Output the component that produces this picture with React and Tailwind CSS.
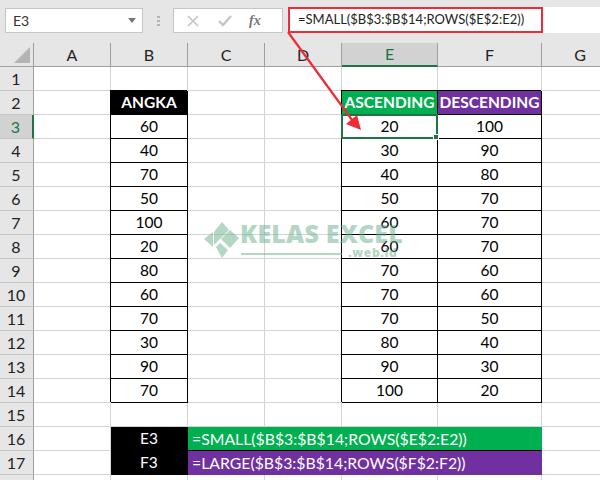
const columns = ["A", "B", "C", "D", "E", "F", "G"];
const angka = [60, 40, 70, 50, 100, 20, 80, 60, 70, 30, 90, 70];
const ascending = [20, 30, 40, 50, 60, 60, 70, 70, 70, 80, 90, 100];
const descending = [100, 90, 80, 70, 70, 70, 60, 60, 50, 40, 30, 20];

function Cell({ className = "bg-white", children }) {
  return (
    <div className={`flex h-6 items-center justify-center border-r border-b border-[#d4d4d4] pt-px ${className}`}>
      {children}
    </div>
  );
}

// black-edged table cell, the shadow paints the left and top edge over the neighbours
function BoxCell({ className = "z-[1] bg-white", children }) {
  return (
    <div className={`relative flex h-6 items-center justify-center border-r border-b border-black pt-px shadow-[-1px_-1px_0_#000] ${className}`}>
      {children}
    </div>
  );
}

function RowHead({ n, active }) {
  return (
    <div
      className={`flex h-6 items-center justify-center border-b border-[#c6c6c6] pt-px pr-px text-[16px] ${
        active ? "border-r-2 border-r-[#217346] bg-[#d2d2d2] text-[#217346]" : "border-r border-r-[#9f9f9f] bg-[#e6e6e6] text-[#222]"
      }`}
    >
      {n}
    </div>
  );
}

function Watermark() {
  return (
    <div className="pointer-events-none absolute top-[221px] left-[203px] z-[3] h-[40px] w-[200px] text-[#6aaf8d] opacity-50">
      <svg width="37" height="38" viewBox="0 0 37 38" className="absolute top-0 left-0" fill="currentColor">
        <polygon points="1,18 10,11 10,26" />
        <polygon points="11,11 19,1 26,9 11,24" />
        <polygon points="18,18 27,9 36,17 27,27" />
        <polygon points="13,26 17,22 25,29 19,37" />
      </svg>
      <div className="absolute top-[-3px] left-[37px] text-[25px] leading-[30px] font-extrabold tracking-[0.2px] whitespace-nowrap font-['Open_Sans',sans-serif]">
        KELAS EXCEL
      </div>
      <div className="absolute top-[32px] left-[38px] h-[2px] w-[101px] bg-current" />
      <div className="absolute top-[24px] left-[145px] text-[12px] leading-[16px] font-extrabold tracking-[0.7px] whitespace-nowrap font-['Open_Sans',sans-serif]">
        .web.id
      </div>
    </div>
  );
}

function RedArrow() {
  return (
    <svg width="600" height="480" className="pointer-events-none absolute top-0 left-0 z-[4]">
      <line x1="288" y1="32" x2="352" y2="120" stroke="#ee2b36" strokeWidth="2.2" />
      <polygon points="361,130 346,124 357,115" fill="#ee2b36" />
    </svg>
  );
}

export default function App() {
  return (
    <div className="relative h-[480px] w-[600px] overflow-hidden bg-white text-[15.5px] text-black font-['Lato',sans-serif]">
      {/* formula bar */}
      <div className="flex h-[43px] items-start bg-[#e6e6e6] pt-[7px]">
        <div className="mt-px ml-[5px] flex h-[25px] w-[138px] items-center justify-between border border-[#c6c6c6] bg-white pr-[6px] pl-[7px] text-[14px] text-[#333]">
          E3
          <svg width="8" height="5" viewBox="0 0 8 5">
            <polygon points="0,0 8,0 4,5" fill="#777" />
          </svg>
        </div>
        <div className="mt-[9px] ml-[14px] flex w-[3px] flex-col gap-[2px]">
          <span className="h-[2px] w-[3px] bg-[#b4b4b4]" />
          <span className="h-[2px] w-[3px] bg-[#b4b4b4]" />
          <span className="h-[2px] w-[3px] bg-[#b4b4b4]" />
        </div>
        <div className="mt-px ml-[13px] flex h-[25px] w-[110px] items-center border border-[#c6c6c6] bg-white">
          <svg width="12" height="12" viewBox="0 0 12 12" className="ml-[13px]" stroke="#c4c4c4" strokeWidth="1.6" fill="none">
            <path d="M1 1 L11 11 M11 1 L1 11" />
          </svg>
          <svg width="14" height="12" viewBox="0 0 14 12" className="ml-[19px]" stroke="#c4c4c4" strokeWidth="2.4" fill="none">
            <path d="M1 6 L5 10 L13 1" />
          </svg>
          <span className="ml-[17px] text-[14px] font-bold text-[#777] italic font-['Liberation_Serif',serif]">fx</span>
        </div>
        <div className="ml-[5px] flex h-[26px] flex-1 bg-white">
          <div className="flex h-[26px] w-[255px] items-center border-2 border-[#ee2b36] pl-[8px] text-[13px] whitespace-nowrap text-[#222]">
            =SMALL($B$3:$B$14;ROWS($E$2:E2))
          </div>
        </div>
      </div>

      {/* sheet */}
      <div className="grid w-[677px] grid-cols-[34px_77px_77px_77px_77px_96px_104px_77px]">
        <div className="flex h-[24px] items-end justify-end border-r border-b border-[#9f9f9f] bg-[#e6e6e6] pr-[3px] pb-[3px]">
          <svg width="16" height="16" viewBox="0 0 16 16">
            <polygon points="16,0 16,16 0,16" fill="#b4b4b4" />
          </svg>
        </div>
        {columns.map((c) => (
          <div
            key={c}
            className={`flex h-[24px] items-center justify-center text-[16px] ${
              c === "E"
                ? "border-r border-b-2 border-r-[#9f9f9f] border-b-[#217346] bg-[#d2d2d2] text-[#217346]"
                : "border-r border-b border-[#9f9f9f] bg-[#e6e6e6] text-[#222]"
            }`}
          >
            {c}
          </div>
        ))}

        <RowHead n={1} />
        {columns.map((c) => (
          <Cell key={c} />
        ))}

        <RowHead n={2} />
        <Cell />
        <BoxCell className="z-[1] bg-black font-bold text-white">ANGKA</BoxCell>
        <Cell />
        <Cell />
        <BoxCell className="z-[1] bg-[#00b050] font-bold text-white">ASCENDING</BoxCell>
        <BoxCell className="z-[1] bg-[#7030a0] font-bold text-white">DESCENDING</BoxCell>
        <Cell />

        {angka.map((v, i) => (
          <div key={i} className="contents">
            <RowHead n={i + 3} active={i === 0} />
            <Cell />
            <BoxCell>{v}</BoxCell>
            <Cell />
            <Cell />
            <BoxCell className={i === 0 ? "z-[2] bg-white" : "z-[1] bg-white"}>
              {ascending[i]}
              {i === 0 && (
                <div className="absolute -top-px -left-px h-[25px] w-[97px] border-2 border-[#217346]">
                  <span className="absolute -right-[3px] -bottom-[3px] h-[6px] w-[6px] border border-white bg-[#217346]" />
                </div>
              )}
            </BoxCell>
            <BoxCell>{descending[i]}</BoxCell>
            <Cell />
          </div>
        ))}

        <RowHead n={15} />
        {columns.map((c) => (
          <Cell key={c} />
        ))}

        <RowHead n={16} />
        <Cell />
        <Cell className="border-black bg-black text-white">E3</Cell>
        <Cell className="col-span-4 justify-start !border-r-[#00b050] !border-b-black bg-[#00b050] pl-[4px] text-[15.8px] text-white">
          =SMALL($B$3:$B$14;ROWS($E$2:E2))
        </Cell>
        <Cell />

        <RowHead n={17} />
        <Cell />
        <Cell className="border-black bg-black text-white">F3</Cell>
        <Cell className="col-span-4 justify-start !border-r-[#7030a0] !border-b-[#7030a0] bg-[#7030a0] pl-[4px] text-[15.8px] text-white">
          =LARGE($B$3:$B$14;ROWS($F$2:F2))
        </Cell>
        <Cell />

        <RowHead />
        {columns.map((c) => (
          <Cell key={c} />
        ))}
      </div>

      <Watermark />
      <RedArrow />
    </div>
  );
}
